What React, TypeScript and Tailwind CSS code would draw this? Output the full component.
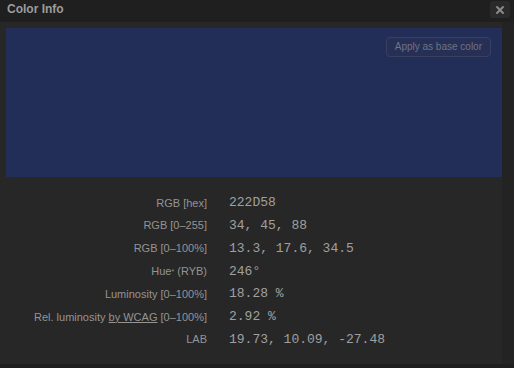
import { X } from 'lucide-react';

const rows: { label: React.ReactNode; value: string }[] = [
  { label: 'RGB [hex]', value: '222D58' },
  { label: 'RGB [0–255]', value: '34, 45, 88' },
  { label: 'RGB [0–100%]', value: '13.3, 17.6, 34.5' },
  {
    label: (
      <>
        Hue<sup className="text-[7px] relative -top-[1px]">*</sup> (RYB)
      </>
    ),
    value: '246°',
  },
  { label: 'Luminosity [0–100%]', value: '18.28 %' },
  {
    label: (
      <>
        Rel. luminosity <span className="underline">by WCAG</span> [0–100%]
      </>
    ),
    value: '2.92 %',
  },
  { label: 'LAB', value: '19.73, 10.09, -27.48' },
];

export default function App() {
  return (
    <div className="w-[514px] h-[368px] bg-[#1f1f1f] flex flex-col overflow-hidden font-['Liberation_Sans',Arial,sans-serif]">
      {/* Title bar */}
      <div className="h-[22px] shrink-0 flex items-start justify-between pl-[7px] pr-[4px]">
        <span className="text-[12px] font-bold text-[#9c9c9c] leading-[22px] -mt-[2px]">Color Info</span>
        <button className="w-[20px] h-[17px] mt-[1px] rounded-[3px] bg-[#2a2a2a] flex items-center justify-center">
          <X className="w-[12px] h-[12px] text-[#8a8a8a]" strokeWidth={4} />
        </button>
      </div>

      {/* Body */}
      <div className="flex-1 flex bg-[#272727]">
        <div className="flex-1 flex flex-col pl-[6px] pt-[6px]">
          <div className="h-[149px] bg-[#222d58] flex justify-end items-start pt-[9px] pr-[11px]">
            <button className="h-[20px] px-[8px] rounded-[4px] border border-[#3a4060] bg-[#262f56] text-[10px] text-[#6f7383] leading-none">
              Apply as base color
            </button>
          </div>
          <div className="mt-[14.5px] grid grid-cols-[201px_1fr] gap-x-[22px]">
            {rows.map((r, i) => (
              <div key={i} className="contents">
                <div className="h-[22.8px] flex items-center justify-end text-[11px] text-[#949494]">
                  <span>{r.label}</span>
                </div>
                <div className="h-[22.8px] flex items-center font-['Liberation_Mono','Courier_New',monospace] text-[13px] text-[#a0a0a0]">
                  {r.value}
                </div>
              </div>
            ))}
          </div>
        </div>
        <div className="w-[12px] shrink-0 bg-[#232323]" />
      </div>
      <div className="h-[4px] shrink-0 bg-[#1e1e1e]" />
    </div>
  );
}
